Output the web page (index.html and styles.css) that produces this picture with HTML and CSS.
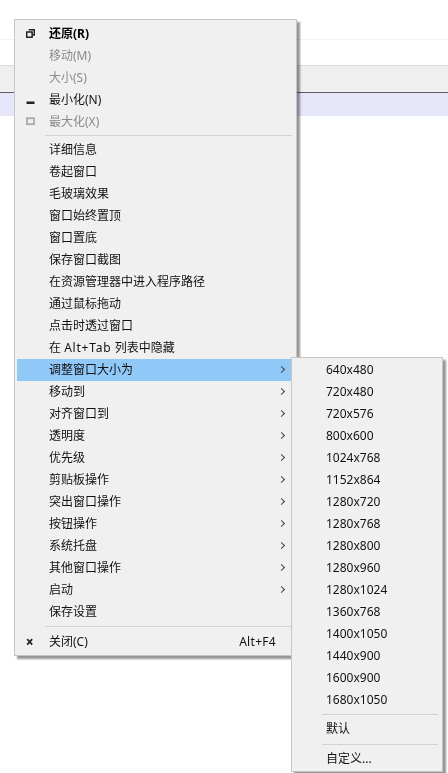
FILE: index.html
```html
<!DOCTYPE html>
<html lang="zh-CN">
<head>
<meta charset="utf-8">
<title>窗口菜单</title>
<link rel="stylesheet" href="styles.css">
</head>
<body>
<div class="page">
  <div class="band-line"></div>
  <div class="band-toolbar"></div>
  <div class="band-selected"></div>
</div>

<nav class="menu menu-main">
  <div class="item bold"><span class="ico"><svg width="9" height="9" viewBox="0 0 9 9"><path d="M2.7 .7h5.6v5.4h-2M.7 2.9h5.4v5.4H.7z" fill="none" stroke="#222" stroke-width="1.5"/></svg></span><span class="label">还原(R)</span></div>
  <div class="item off"><span class="ico"></span><span class="label">移动(M)</span></div>
  <div class="item off"><span class="ico"></span><span class="label">大小(S)</span></div>
  <div class="item"><span class="ico"><svg width="9" height="9" viewBox="0 0 9 9"><rect x=".5" y="6.5" width="8" height="2.5" fill="#222"/></svg></span><span class="label">最小化(N)</span></div>
  <div class="item off"><span class="ico"><svg width="9" height="9" viewBox="0 0 9 9"><rect x="1" y="1.2" width="7" height="6" fill="none" stroke="#aaa" stroke-width="1.8"/></svg></span><span class="label">最大化(X)</span></div>
  <div class="sep sep-6"></div>
  <div class="item"><span class="ico"></span><span class="label">详细信息</span></div>
  <div class="item"><span class="ico"></span><span class="label">卷起窗口</span></div>
  <div class="item"><span class="ico"></span><span class="label">毛玻璃效果</span></div>
  <div class="item"><span class="ico"></span><span class="label">窗口始终置顶</span></div>
  <div class="item"><span class="ico"></span><span class="label">窗口置底</span></div>
  <div class="item"><span class="ico"></span><span class="label">保存窗口截图</span></div>
  <div class="item"><span class="ico"></span><span class="label">在资源管理器中进入程序路径</span></div>
  <div class="item"><span class="ico"></span><span class="label">通过鼠标拖动</span></div>
  <div class="item"><span class="ico"></span><span class="label">点击时透过窗口</span></div>
  <div class="item"><span class="ico"></span><span class="label">在 <span class="latin">Alt+Tab</span> 列表中隐藏</span></div>
  <div class="item active"><span class="ico"></span><span class="label">调整窗口大小为</span><span class="arrow"></span></div>
  <div class="item"><span class="ico"></span><span class="label">移动到</span><span class="arrow"></span></div>
  <div class="item"><span class="ico"></span><span class="label">对齐窗口到</span><span class="arrow"></span></div>
  <div class="item"><span class="ico"></span><span class="label">透明度</span><span class="arrow"></span></div>
  <div class="item"><span class="ico"></span><span class="label">优先级</span><span class="arrow"></span></div>
  <div class="item"><span class="ico"></span><span class="label">剪贴板操作</span><span class="arrow"></span></div>
  <div class="item"><span class="ico"></span><span class="label">突出窗口操作</span><span class="arrow"></span></div>
  <div class="item"><span class="ico"></span><span class="label">按钮操作</span><span class="arrow"></span></div>
  <div class="item"><span class="ico"></span><span class="label">系统托盘</span><span class="arrow"></span></div>
  <div class="item"><span class="ico"></span><span class="label">其他窗口操作</span><span class="arrow"></span></div>
  <div class="item"><span class="ico"></span><span class="label">启动</span><span class="arrow"></span></div>
  <div class="item"><span class="ico"></span><span class="label">保存设置</span></div>
  <div class="sep sep-8"></div>
  <div class="item"><span class="ico"><svg width="9" height="9" viewBox="0 0 9 9"><path d="M1.2 2.2l5 5.4M6.2 2.2l-5 5.4" fill="none" stroke="#222" stroke-width="1.7"/></svg></span><span class="label">关闭(C)</span><span class="shortcut">Alt+F4</span></div>
</nav>

<nav class="menu menu-sub">
  <div class="item"><span class="label">640x480</span></div>
  <div class="item"><span class="label">720x480</span></div>
  <div class="item"><span class="label">720x576</span></div>
  <div class="item"><span class="label">800x600</span></div>
  <div class="item"><span class="label">1024x768</span></div>
  <div class="item"><span class="label">1152x864</span></div>
  <div class="item"><span class="label">1280x720</span></div>
  <div class="item"><span class="label">1280x768</span></div>
  <div class="item"><span class="label">1280x800</span></div>
  <div class="item"><span class="label">1280x960</span></div>
  <div class="item"><span class="label">1280x1024</span></div>
  <div class="item"><span class="label">1360x768</span></div>
  <div class="item"><span class="label">1400x1050</span></div>
  <div class="item"><span class="label">1440x900</span></div>
  <div class="item"><span class="label">1600x900</span></div>
  <div class="item"><span class="label">1680x1050</span></div>
  <div class="sep sep-7"></div>
  <div class="item"><span class="label">默认</span></div>
  <div class="sep sep-8"></div>
  <div class="item"><span class="label">自定义...</span></div>
</nav>
</body>
</html>
```

FILE: styles.css
```css
* { box-sizing: border-box; }
html, body { margin: 0; height: 100%; background: #fff; overflow: hidden; }
body {
  position: relative;
  font-family: "Noto Sans", "Noto Sans CJK SC", sans-serif;
  font-size: 12px;
  color: #111;
}
.page { padding-top: 39px; }
.band-line { height: 1px; background: #f3f3f3; }
.band-toolbar {
  margin-top: 25px;
  height: 28px;
  background: #efefef;
  border-top: 1px solid #dcdcdc;
  border-bottom: 1px solid #5c5c68;
}
.band-selected { height: 23px; background: #e6e6fa; }

.menu {
  position: absolute;
  background: #f0f0f0;
  border: 1px solid #c6c6c6;
  box-shadow: 3px 3px 2px rgba(0, 0, 0, .42);
  filter: blur(.25px);
}
.menu-main { left: 14px; top: 19px; width: 283px; height: 637px; padding: 3px 2px 2px; }
.menu-sub { left: 291px; top: 357px; width: 152px; height: 415px; padding: 1px 2px; }

.item { display: flex; align-items: center; height: 22px; white-space: nowrap; }
.ico { flex: none; width: 32px; display: flex; justify-content: flex-start; padding-left: 9px; padding-bottom: 2px; }
.label { flex: 1; line-height: 22px; }
.latin { letter-spacing: .8px; }
.bold { font-weight: 700; color: #000; }
.off { color: #8a8a8a; }
.active { background: #90c8f8; }
.shortcut { margin-right: 18px; line-height: 22px; letter-spacing: .3px; }
.arrow {
  flex: none;
  width: 5px;
  height: 5px;
  margin-right: 10px;
  margin-bottom: 2px;
  transform: rotate(45deg);
  border-top: 1px solid #444;
  border-right: 1px solid #444;
}
.sep { display: flex; align-items: center; padding-left: 28px; padding-right: 2px; }
.sep::before { content: ""; flex: 1; height: 1px; background: #d2d2d2; }
.sep-6 { height: 6px; }
.sep-7 { height: 7px; }
.sep-8 { height: 8px; }

.menu-main .sep { padding-bottom: 2px; }
.menu-sub .label { padding-left: 32px; }
.menu-sub .sep { padding-left: 28px; padding-right: 2px; }
```
